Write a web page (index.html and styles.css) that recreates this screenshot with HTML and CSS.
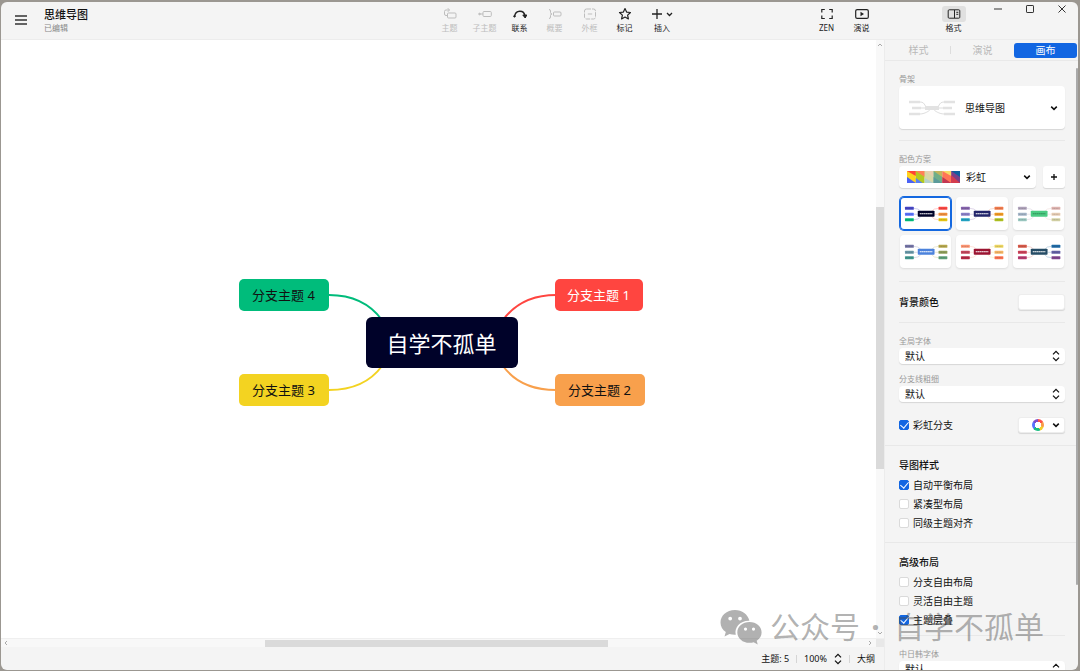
FILE: index.html
```html
<!DOCTYPE html>
<html lang="zh-CN">
<head>
<meta charset="utf-8">
<title>思维导图</title>
<link rel="stylesheet" href="styles.css">
</head>
<body>
<svg class="sprite" aria-hidden="true">
  <symbol id="down" viewBox="0 0 8 8"><path d="M1.2 2.600 4 5.400 6.800 2.600" fill="none" stroke="currentColor" stroke-width="1.500"/></symbol>
  <symbol id="updown" viewBox="0 0 8 12"><path d="M1 4.400 4 1.400 7 4.400M1 7.600 4 10.600 7 7.600" fill="none" stroke="currentColor" stroke-width="1.300"/></symbol>
  <symbol id="thumb" viewBox="0 0 52 34">
    <g fill="none" stroke-width=".5" opacity=".5">
      <path d="M14 11.500q5 0 7 3M14 17.500h4M14 23q5 0 7-3" style="stroke:var(--l1)"/>
      <path d="M39 11.500q-5 0-7 3M39 17.500h-4M39 23q-5 0-7-3" style="stroke:var(--r1)"/>
    </g>
    <rect x="18" y="14" width="17" height="6" rx=".8" style="fill:var(--c)"/>
    <rect x="5" y="10" width="9" height="3" rx=".6" style="fill:var(--l1)"/>
    <rect x="5" y="16" width="9" height="3" rx=".6" style="fill:var(--l2)"/>
    <rect x="5" y="21.500" width="9" height="3" rx=".6" style="fill:var(--l3)"/>
    <rect x="39" y="10" width="9" height="3" rx=".6" style="fill:var(--r1)"/>
    <rect x="39" y="16" width="9" height="3" rx=".6" style="fill:var(--r2)"/>
    <rect x="39" y="21.500" width="9" height="3" rx=".6" style="fill:var(--r3)"/>
    <path d="M20 17h13" stroke-width="1.200" stroke-dasharray="1.800 .3" style="stroke:var(--t)"/>
    <path d="M6 11.500h7M6 17.500h7M6 23h7M40 11.500h7M40 17.500h7M40 23h7" stroke="#333" stroke-width=".8" stroke-dasharray="1.200 .4" opacity=".3"/>
  </symbol>
</svg>

<div class="window">
  <header class="header">
    <div class="brand">
      <button class="menu" aria-label="菜单"><svg width="12" height="10" viewBox="0 0 12 10"><path d="M0 1h12M0 5h12M0 9h12" stroke="#333" stroke-width="1.300"/></svg></button>
      <div>
        <h1 class="title">思维导图</h1>
        <p class="state">已编辑</p>
      </div>
    </div>
    <nav class="tools">
      <button class="tool" disabled><span class="icon"><svg width="14" height="14" viewBox="0 0 14 14"><rect x="4.500" y="6" width="8.500" height="5" rx="1"/><path d="M4.500 8.500H3Q1.500 8.500 1.500 7V4.500Q1.500 3 3 3h3M4.800 1.200 6.600 3 4.800 4.800"/></svg></span>主题</button>
      <button class="tool" disabled><span class="icon"><svg width="14" height="14" viewBox="0 0 14 14"><path d="M2 7h3"/><circle cx="1.500" cy="7" r=".8" fill="currentColor"/><rect x="5" y="4.500" width="8.300" height="5" rx="1"/></svg></span>子主题</button>
      <button class="tool"><span class="icon"><svg width="14" height="14" viewBox="0 0 14 14"><path d="M1.500 9.500C2.500 2.500 11 2.500 12 9" stroke-width="1.400"/><path d="M9.800 8h4l-1.600 3z" fill="currentColor"/><circle cx="1.500" cy="9.300" r=".8" fill="currentColor"/></svg></span>联系</button>
      <button class="tool" disabled><span class="icon"><svg width="14" height="14" viewBox="0 0 14 14"><path d="M1 2.500q1.500 0 1.500 1.500v1.500Q2.500 7 4 7q-1.500 0-1.500 1.500V10q0 1.500-1.500 1.500"/><rect x="5.500" y="5" width="7.500" height="4" rx="1"/></svg></span>概要</button>
      <button class="tool" disabled><span class="icon"><svg width="14" height="14" viewBox="0 0 14 14"><rect x="1.500" y="2" width="11" height="10" rx="2" stroke-dasharray="4.500 1"/><path d="M4.800 7h4.400"/></svg></span>外框</button>
      <button class="tool"><span class="icon"><svg width="14" height="14" viewBox="0 0 14 14"><path d="m7 1.600 1.600 3.500 3.900.4-2.900 2.600.8 3.800L7 10l-3.400 1.900.8-3.800-2.900-2.600 3.900-.4z" stroke-width="1.200" stroke-linejoin="round"/></svg></span>标记</button>
      <button class="tool insert"><span class="icon"><svg width="24" height="14" viewBox="0 0 24 14"><path d="M2 7h10M7 2v10" stroke-width="1.300"/><path d="m17 6 2.500 2.500L22 6" stroke-width="1.300"/></svg></span>插入</button>
    </nav>
    <nav class="views">
      <button class="tool"><span class="icon"><svg width="14" height="14" viewBox="0 0 14 14"><path d="M1.800 5.500v-3h3M9.200 2.500h3v3M12.200 8.500v3h-3M4.800 11.500h-3v-3" stroke-width="1.200"/></svg></span>ZEN</button>
      <button class="tool"><span class="icon"><svg width="14" height="14" viewBox="0 0 14 14"><rect x=".7" y="2.600" width="12.600" height="8.800" rx="1.500" stroke-width="1.200"/><path d="M5.500 4.800v4.400L9 7z" fill="currentColor" stroke="none"/></svg></span>演说</button>
    </nav>
    <button class="tool"><span class="icon on"><svg width="14" height="14" viewBox="0 0 14 14"><rect x="1.200" y="2.800" width="11.600" height="8.400" rx="1"/><path d="M7.500 3v8M9.300 5.300h2M9.300 7.300h2"/></svg></span>格式</button>
    <div class="controls">
      <button aria-label="最小化"><svg width="10" height="10" viewBox="0 0 10 10"><path d="M1 5h8"/></svg></button>
      <button aria-label="最大化"><svg width="10" height="10" viewBox="0 0 10 10"><rect x="1.500" y="1.500" width="7" height="7" rx=".6"/></svg></button>
      <button aria-label="关闭"><svg width="10" height="10" viewBox="0 0 10 10"><path d="m1.500 1.500 7 7M8.500 1.500l-7 7"/></svg></button>
    </div>
  </header>

  <div class="body">
    <main class="work">
      <div class="stage">
        <div class="canvas">
          <div class="map">
            <svg class="lines" width="406" height="128" viewBox="0 0 406 128" fill="none" stroke-width="2">
              <path d="M90 16C115 16 132 26 143 41" stroke="#00bc7b"/>
              <path d="M90 111C115 111 132 102 143 87" stroke="#f3d321"/>
              <path d="M317 16C291 16 275 26 264 41" stroke="#ff4540"/>
              <path d="M317 111C291 111 275 102 264 87" stroke="#f8a04c"/>
            </svg>
            <div class="node n4">分支主题 4</div>
            <div class="node n3">分支主题 3</div>
            <div class="node n1">分支主题 1</div>
            <div class="node n2">分支主题 2</div>
            <div class="node center">自学不孤单</div>
          </div>
        </div>
        <div class="vbar">
          <svg width="6" height="6" viewBox="0 0 6 6"><path d="m1 4 2-2 2 2"/></svg>
          <div class="vtrack"><i></i></div>
          <svg width="6" height="6" viewBox="0 0 6 6"><path d="m1 2 2 2 2-2"/></svg>
        </div>
      </div>
      <div class="hbar">
        <svg width="6" height="6" viewBox="0 0 6 6"><path d="M4 1 2 3l2 2"/></svg>
        <div class="htrack"><i></i></div>
        <svg width="6" height="6" viewBox="0 0 6 6"><path d="m2 1 2 2-2 2"/></svg>
        <b></b>
      </div>
      <footer class="status">
        <span>主题: 5</span><i></i>
        <button>100%<svg width="8" height="12"><use href="#updown"/></svg></button><i></i>
        <button>大纲</button>
      </footer>
    </main>

    <aside class="panel">
      <div class="tabs">
        <button>样式</button><i></i><button>演说</button><button class="active">画布</button>
      </div>
      <div class="scroll">
        <section class="group">
          <label class="label" for="skeleton">骨架</label>
          <div class="field card">
            <svg width="46" height="16" viewBox="0 0 46 16"><path d="M11 2c6 0 4 6 9 6s-3 6-9 6M35 2c-6 0-4 6-9 6s3 6 9 6M10 8h26" fill="none" stroke="#cfcfcf" stroke-width=".7"/><path d="M0 .8h11v2.500H0zM3 6.800h9v2.500H3zM0 12.700h11v2.500H0zM35 .8h11v2.500H35zM34 6.800h9v2.500h-9zM35 12.700h11v2.500H35zM16 6h14v4H16z" fill="#e2e2e2"/></svg>
            <select id="skeleton"><option>思维导图</option></select>
            <svg class="caret" width="8" height="8"><use href="#down"/></svg>
          </div>
        </section>

        <section class="group schemes">
          <label class="label" for="scheme">配色方案</label>
          <div class="row">
            <div class="field scheme">
              <svg width="53" height="12" viewBox="0 0 54 12" preserveAspectRatio="none">
                <path d="M0 0h9v12H0z" fill="#ffd31c"/><path d="M0 0h9v5z" fill="#ff4136"/><path d="M0 6l9 6H0z" fill="#4b62f5"/>
                <path d="M9 0h9v12H9z" fill="#b2c91f"/><path d="M9 0h9v6z" fill="#ff8058"/><path d="M9 7l7 5H9z" fill="#5a7ff2"/>
                <path d="M18 0h9v12h-9z" fill="#d8d8a8"/><path d="M18 0h9v6z" fill="#e9cfb0"/><path d="M18 7l9 5h-9z" fill="#b4d2cd"/>
                <path d="M27 0h9v12h-9z" fill="#6fae88"/><path d="M27 0h9v6z" fill="#c4b45c"/><path d="M27 6l9 6h-9z" fill="#5b9a9a"/>
                <path d="M36 0h9v12h-9z" fill="#ff7556"/><path d="M36 0h9v5z" fill="#f5da67"/><path d="M36 6l9 6h-9z" fill="#c33752"/>
                <path d="M45 0h9v12h-9z" fill="#7b4088"/><path d="M45 0h9v6z" fill="#0e5f9e"/><path d="M45 4l9 8h-9z" fill="#d53c4d"/>
              </svg>
              <select id="scheme"><option>彩虹</option></select>
              <svg class="caret" width="8" height="8"><use href="#down"/></svg>
            </div>
            <button class="add" aria-label="添加"><svg width="8" height="8" viewBox="0 0 8 8"><path d="M1 4h6M4 1v6" stroke="#111" stroke-width="1.300"/></svg></button>
          </div>
          <div class="thumbs">
            <button class="t1 selected" aria-label="配色 1"><svg viewBox="0 0 52 34"><use href="#thumb"/></svg></button>
            <button class="t2" aria-label="配色 2"><svg viewBox="0 0 52 34"><use href="#thumb"/></svg></button>
            <button class="t3" aria-label="配色 3"><svg viewBox="0 0 52 34"><use href="#thumb"/></svg></button>
            <button class="t4" aria-label="配色 4"><svg viewBox="0 0 52 34"><use href="#thumb"/></svg></button>
            <button class="t5" aria-label="配色 5"><svg viewBox="0 0 52 34"><use href="#thumb"/></svg></button>
            <button class="t6" aria-label="配色 6"><svg viewBox="0 0 52 34"><use href="#thumb"/></svg></button>
          </div>
        </section>

        <section class="group background row between">
          <h2 id="bg">背景颜色</h2>
          <button class="swatch" aria-labelledby="bg"></button>
        </section>

        <section class="group wide">
          <label class="label" for="font">全局字体</label>
          <div class="field slim">
            <select id="font"><option>默认</option></select>
            <svg class="caret" width="8" height="12"><use href="#updown"/></svg>
          </div>
          <label class="label next" for="weight">分支线粗细</label>
          <div class="field slim">
            <select id="weight"><option>默认</option></select>
            <svg class="caret" width="8" height="12"><use href="#updown"/></svg>
          </div>
          <div class="row between rainbow">
            <label class="check"><input type="checkbox" checked>彩虹分支</label>
            <button class="swatch wheel" aria-label="彩虹颜色"><i></i><svg width="8" height="8"><use href="#down"/></svg></button>
          </div>
        </section>

        <section class="group wide options">
          <h2>导图样式</h2>
          <label class="check"><input type="checkbox" checked>自动平衡布局</label>
          <label class="check"><input type="checkbox">紧凑型布局</label>
          <label class="check"><input type="checkbox">同级主题对齐</label>
        </section>

        <section class="group advanced">
          <h2>高级布局</h2>
          <label class="check"><input type="checkbox">分支自由布局</label>
          <label class="check"><input type="checkbox">灵活自由主题</label>
          <label class="check"><input type="checkbox" checked>主题层叠</label>
        </section>

        <section class="group">
          <label class="label" for="cjk">中日韩字体</label>
          <div class="field slim">
            <select id="cjk"><option>默认</option></select>
            <svg class="caret" width="8" height="12"><use href="#updown"/></svg>
          </div>
        </section>
      </div>
      <i class="pbar"></i>
    </aside>
  </div>

  <div class="watermark">
    <svg width="42" height="36" viewBox="0 0 42 36"><path fill="currentColor" fill-rule="evenodd" d="M15 1C6.500 1 .5 6.600.5 13.500c0 4 2 7.300 5.300 9.600L4.500 27.500l5-2.600c1.900.6 3.800.9 6.300.8-1.800-7.200 4.600-14.300 13.600-13.900C28 5.500 22 1 15 1zM10.200 7.700a1.900 1.900 0 1 1 0 3.800 1.900 1.900 0 0 1 0-3.800zm9.800 0a1.900 1.900 0 1 1 0 3.800 1.900 1.900 0 0 1 0-3.800zM29.500 13c-6.800 0-12.200 4.600-12.200 10.400s5.400 10.400 12.200 10.400c1.500 0 2.900-.2 4.200-.6l4 2.200-1-3.700c3.100-2 4.900-5 4.900-8.300C41.600 17.600 36.300 13 29.500 13zm-4 5.500a1.600 1.600 0 1 1 0 3.200 1.600 1.600 0 0 1 0-3.200zm8 0a1.600 1.600 0 1 1 0 3.200 1.600 1.600 0 0 1 0-3.200z"/></svg>
    <span>公众号</span><span class="dot">·</span><span>自学不孤单</span>
  </div>
</div>
</body>
</html>
```
FILE: styles.css
```css
* { box-sizing: border-box; margin: 0; }

body {
  height: 100vh;
  padding: 2px 2px 1px 1px;
  overflow: hidden;
  background: #9b9791;
  color: #111;
  font: 10px/14px "Noto Sans", "Noto Sans CJK SC", sans-serif;
}

button, select, input { font: inherit; color: inherit; }
button { border: 0; padding: 0; background: none; }
svg { flex: none; display: block; }
.sprite { position: absolute; width: 0; height: 0; }

.window {
  position: relative;
  display: flex;
  flex-direction: column;
  height: 100%;
  overflow: hidden;
  border-radius: 6px;
  background: #f4f4f4;
}

/* Header */
.header {
  display: flex;
  align-items: flex-start;
  flex: none;
  height: 38px;
  padding-top: 4px;
  border-bottom: 1px solid #ececec;
}
.brand { display: flex; flex: 1; gap: 17px; padding-left: 14px; }
.menu { height: 28px; }
.title { font-size: 11px; line-height: 16px; font-weight: 500; margin-top: 1px; }
.state { font-size: 8px; line-height: 10px; color: #888; }
.tools, .views { display: flex; }
.views { margin-left: 127px; margin-right: 57px; }
.tool {
  display: flex;
  flex-direction: column;
  align-items: center;
  width: 35px;
  color: #222;
  font-size: 8px;
  line-height: 12px;
}
.tool:disabled { color: #bdbdbd; }
.insert { width: 40px; }
.icon {
  display: flex;
  align-items: center;
  justify-content: center;
  width: 24px;
  height: 16px;
  border-radius: 3px;
}
.icon svg { fill: none; stroke: currentColor; stroke-width: 1; }
.icon.on { background: #e0e0e0; }
.controls { display: flex; margin-left: 11px; }
.controls button {
  display: flex;
  justify-content: center;
  width: 32px;
  height: 12px;
}
.controls svg { fill: none; stroke: #333; stroke-width: 1; margin-top: -2px; }

/* Work area */
.body { display: flex; flex: 1; min-height: 0; }
.work { display: flex; flex: 1; flex-direction: column; min-width: 0; }
.stage { display: flex; flex: 1; min-height: 0; }
.canvas {
  display: flex;
  flex: 1;
  align-items: center;
  justify-content: center;
  padding-top: 8px;
  padding-left: 6px;
  background: #fff;
}
.map { position: relative; width: 406px; height: 128px; }
.lines { position: absolute; top: 0; left: 0; }
.node {
  position: absolute;
  display: flex;
  align-items: center;
  justify-content: center;
  width: 90px;
  height: 32px;
  border-radius: 5px;
  font-size: 13px;
  white-space: nowrap;
}
.n4 { left: 0; top: 0; background: #00bc7b; }
.n3 { left: 0; top: 95px; background: #f3d321; }
.n1 { left: 316px; top: 0; width: 88px; background: #ff4540; color: #fff; }
.n2 { left: 316px; top: 95px; background: #f8a04c; }
.center {
  left: 127px;
  top: 38px;
  width: 152px;
  height: 51px;
  border-radius: 6px;
  background: #000229;
  color: #fff;
  font-size: 22px;
}

.vbar, .hbar { display: flex; align-items: center; background: #f8f8f8; }
.vbar { flex-direction: column; width: 8px; padding: 2px 0; }
.vbar svg, .hbar svg { fill: none; stroke: #aaa; stroke-width: 1; }
.vtrack { flex: 1; width: 8px; padding-top: 159px; }
.vtrack i { display: block; width: 8px; height: 62%; background: #dadada; }
.hbar { height: 9px; padding-left: 2px; border-top: 1px solid #efefef; }
.htrack { flex: 1; padding-left: 256px; }
.htrack i { display: block; width: 57%; height: 7px; background: #dadada; }
.hbar b { width: 8px; height: 8px; background: #e8e8e8; margin-left: 3px; }

.status {
  display: flex;
  align-items: center;
  justify-content: flex-end;
  gap: 7px;
  height: 23px;
  padding-right: 9px;
}
.status, .status button { font-size: 9px; }
.status i { width: 1px; height: 8px; background: #d5d5d5; }
.status button { display: flex; align-items: center; gap: 7px; }

/* Side panel */
.panel {
  position: relative;
  display: flex;
  flex-direction: column;
  width: 194px;
  border-left: 1px solid #ececec;
}
.tabs {
  display: flex;
  align-items: center;
  flex: none;
  height: 21px;
  padding-right: 1px;
  padding-left: 2px;
  border-bottom: 1px solid #e9e9e9;
}
.tabs button { flex: 1; height: 15px; color: #b9b9b9; }
.tabs i { width: 1px; height: 8px; background: #ddd; }
.tabs .active { border-radius: 3px; background: #1266e2; color: #fff; }
.scroll { flex: 1; min-height: 0; overflow: hidden; }
.pbar {
  position: absolute;
  top: 28px;
  right: 0;
  width: 2px;
  height: 82%;
  border-radius: 1px;
  background: #a9a9a9;
}

.group { margin: 0 13px 0 14px; padding: 11px 0; border-bottom: 1px solid #e8e8e8; }
.schemes { padding-bottom: 13px; }
.background { padding: 12px 0; }
.wide { margin: 0; padding: 11px 13px 12px 14px; }
.options { padding-top: 12px; padding-bottom: 10px; }
.advanced { padding: 12px 0 6px; }
.label {
  display: block;
  height: 14px;
  color: #999;
  font-size: 8px;
}
h2 { font-size: 10px; line-height: 14px; font-weight: 500; }
.row { display: flex; align-items: center; }
.between { justify-content: space-between; }

.field {
  display: flex;
  align-items: center;
  border-radius: 4px;
  background: #fff;
  box-shadow: 0 1px 1px #d6d6d6;
}
.field select {
  flex: 1;
  min-width: 0;
  border: 0;
  padding: 0;
  appearance: none;
  background: none;
}
.caret { pointer-events: none; }
.card { height: 43px; padding: 0 7px 0 10px; gap: 10px; }
.scheme { flex: 1; height: 22px; padding: 0 5px 0 8px; gap: 6px; }
.add, .swatch { border-radius: 3px; background: #fff; box-shadow: 0 1px 1px #d6d6d6; }
.add {
  display: flex;
  align-items: center;
  justify-content: center;
  width: 22px;
  height: 22px;
  margin-left: 7px;
}
.thumbs {
  display: grid;
  grid-template-columns: repeat(3, 1fr);
  gap: 5px;
  padding: 9px 1px 0 1px;
}
.thumbs button {
  height: 33px;
  border-radius: 4px;
  background: #fff;
  box-shadow: 0 1px 2px #dcdcdc;
}
.thumbs svg { width: 100%; }
.thumbs .selected { box-shadow: 0 0 0 1px #1468e0, inset 0 0 0 1px #1468e0; }
.t1 { --c: #000229; --t: #fff; --l1: #4545c8; --l2: #5973ff; --l3: #00bc7b; --r1: #ff4540; --r2: #f6913b; --r3: #eac814; }
.t2 { --c: #22246a; --t: #fff; --l1: #8663ae; --l2: #8c82cc; --l3: #20a4c5; --r1: #f57c4c; --r2: #f49b20; --r3: #b0c321; }
.t3 { --c: #4bcb82; --t: #318e58; --l1: #b1a5bd; --l2: #a5b7ca; --l3: #9dcac3; --r1: #e2b6b2; --r2: #ead0b7; --r3: #d6d4a7; }
.t4 { --c: #4c83dc; --t: #fff; --l1: #7474a7; --l2: #6798a9; --l3: #409890; --r1: #b8aa4e; --r2: #90a15a; --r3: #5fa37a; }
.t5 { --c: #9b1532; --t: #fff; --l1: #ff9673; --l2: #c8455c; --l3: #b92745; --r1: #f0d862; --r2: #fab866; --r3: #ff7350; }
.t6 { --c: #264d66; --t: #fff; --l1: #d95948; --l2: #ce4058; --l3: #ba3a70; --r1: #1d6ba8; --r2: #6460a8; --r3: #824591; }

.swatch { width: 47px; height: 16px; border: 1px solid #ededed; }
.wheel { display: flex; align-items: center; justify-content: flex-end; gap: 8px; padding-right: 4px; }
.wheel i {
  width: 12px;
  height: 12px;
  border-radius: 50%;
  background: radial-gradient(#fff 0 3px, transparent 3px), conic-gradient(#ff5149 0 60deg, #f99b4b 60deg 110deg, #f3cf2c 110deg 160deg, #18bd80 160deg 230deg, #5973ff 230deg 300deg, #7d4ccc 300deg);
}

.slim { height: 16px; padding: 0 5px 0 6px; }
.next { margin-top: 8px; }
.rainbow { margin-top: 15px; }
.check { display: flex; align-items: center; gap: 4px; height: 19px; }
.rainbow .check { height: 16px; }
h2 + .check { margin-top: 3px; }
.check input {
  width: 10px;
  height: 10px;
  margin: 0;
  appearance: none;
  border: 1px solid #dadada;
  border-radius: 2px;
  background: #fff;
}
.check input:checked {
  display: grid;
  place-items: center;
  border-color: #1266e2;
  background: #1266e2;
}
.check input:checked::after {
  content: "";
  width: 4px;
  height: 7px;
  margin-top: -2px;
  border: solid #fff;
  border-width: 0 1px 1px 0;
  transform: rotate(40deg);
}

/* Overlay mark */
.watermark {
  position: absolute;
  right: 34px;
  bottom: 21px;
  display: flex;
  align-items: center;
  color: rgba(70, 70, 70, .42);
  font-size: 30px;
  line-height: 44px;
  white-space: nowrap;
  pointer-events: none;
}
.watermark svg { margin-right: 8px; }
.dot { width: 34px; padding-right: 3px; text-align: center; font-weight: 700; }
```
